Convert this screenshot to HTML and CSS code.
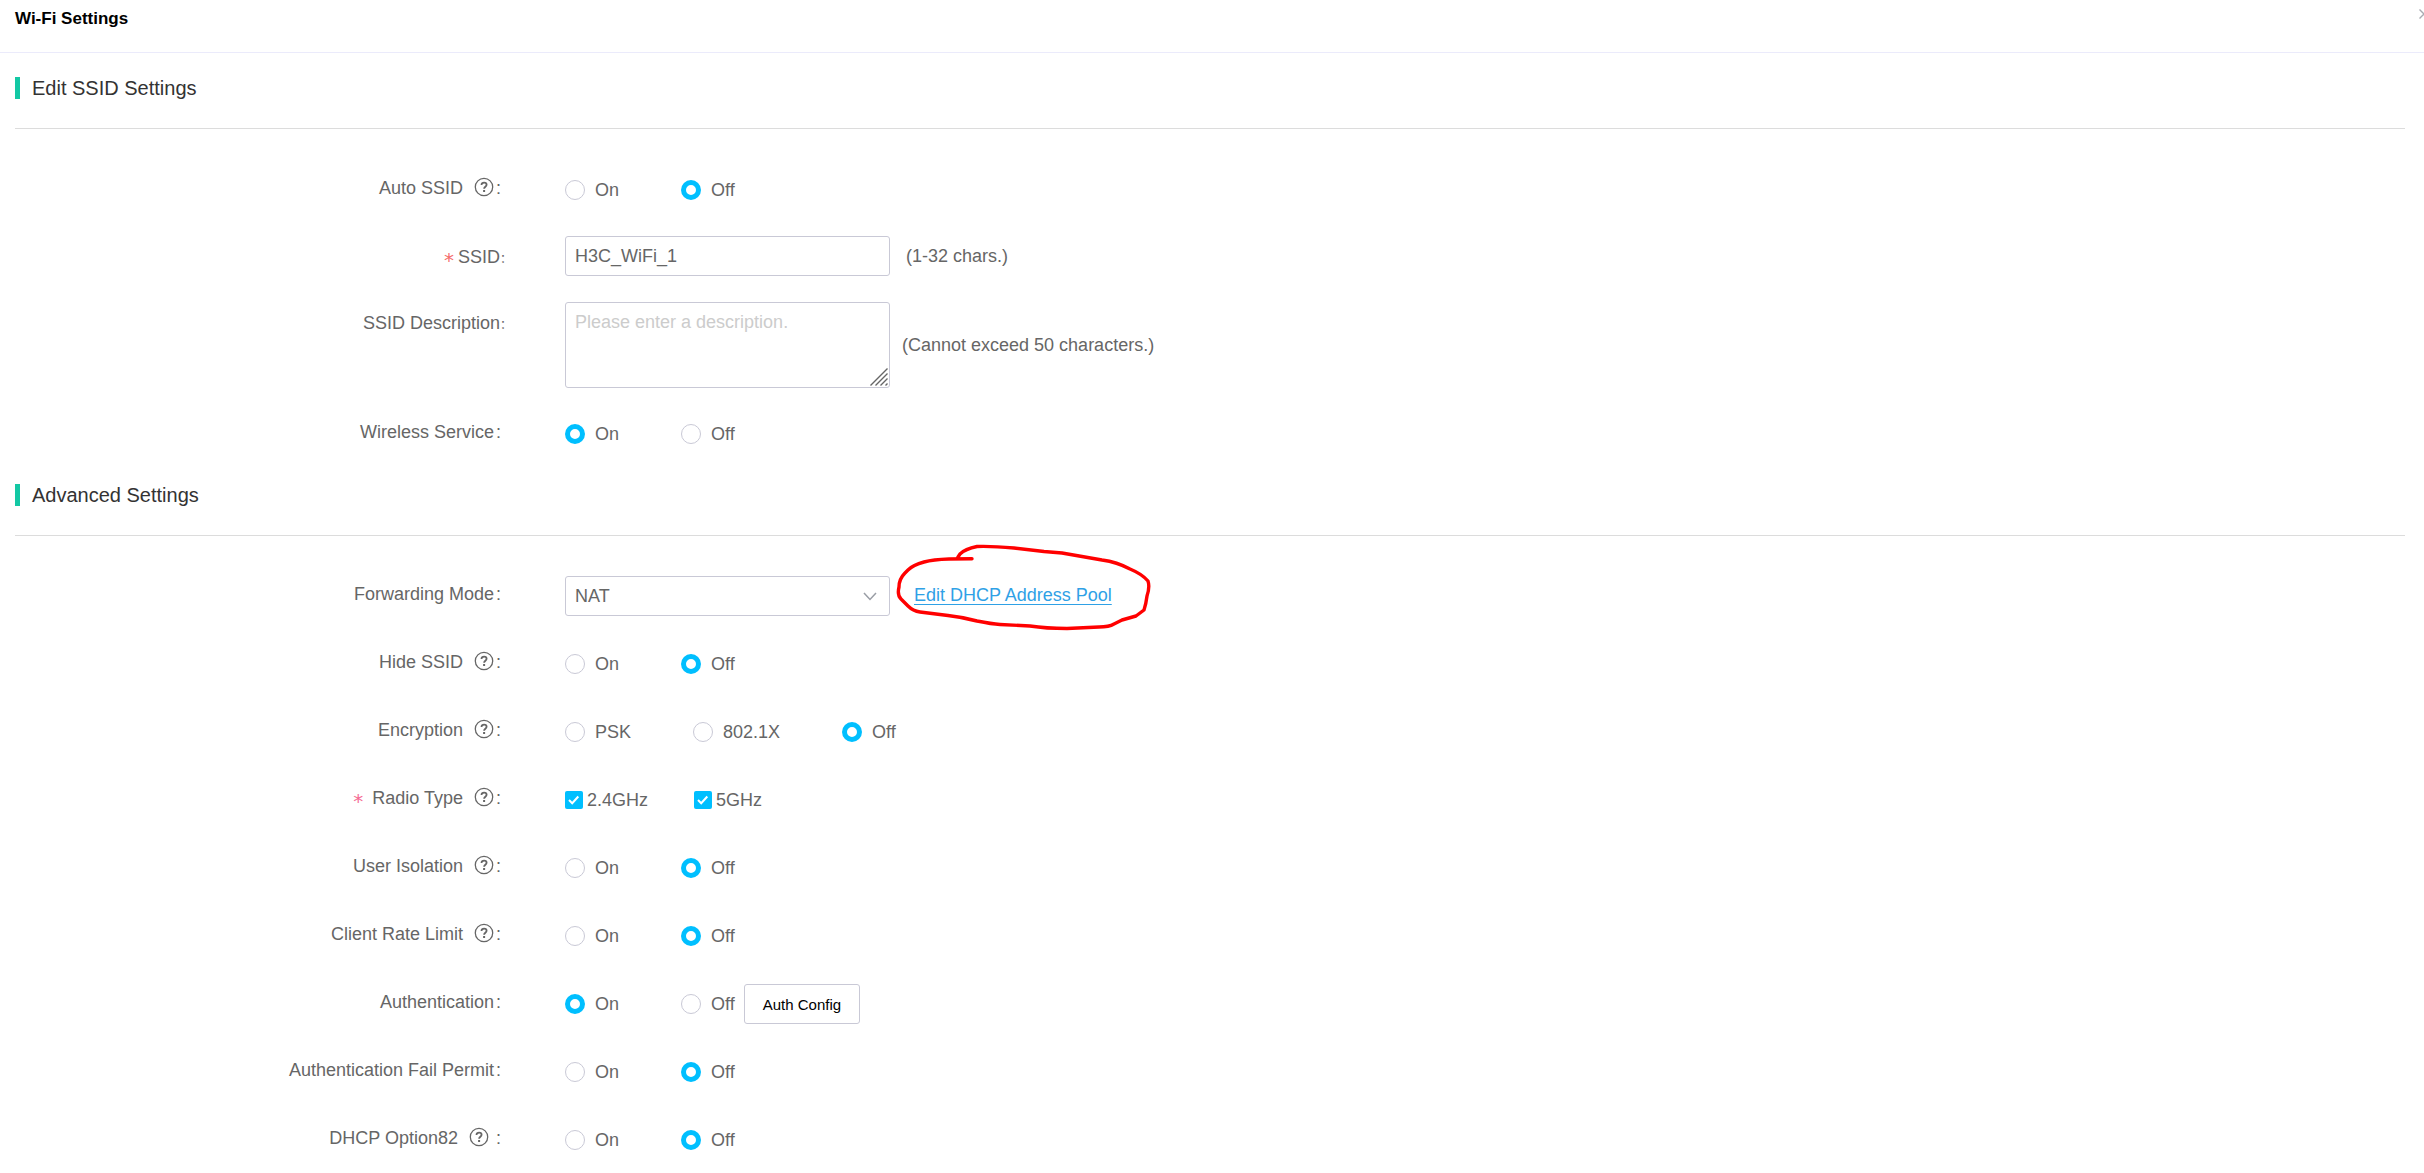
FILE: index.html
```html
<!DOCTYPE html>
<html lang="en">
<head>
    <meta charset="UTF-8">
    <meta name="viewport" content="width=device-width, initial-scale=1.0">
    <title>Wi-Fi Settings</title>
    <link rel="stylesheet" href="styles.css">
</head>
<body>
    <!-- shared icons -->
    <svg class="sprite" aria-hidden="true">
        <symbol id="icon-help" viewBox="0 0 20 20">
            <circle cx="10" cy="10" r="8.7" fill="none" stroke="currentColor" stroke-width="1.3"/>
            <path d="M7.5 8.1c0-1.6 1-2.5 2.6-2.5s2.5 .9 2.5 2.2c0 1.9-2.5 2-2.5 4" fill="none" stroke="currentColor" stroke-width="1.8"/>
            <rect x="9.1" y="13" width="2" height="2" fill="currentColor"/>
        </symbol>
    </svg>

    <header class="header">
        <h1>Wi-Fi Settings</h1>
        <button class="close-btn" type="button" aria-label="Close">
            <svg width="10" height="10" viewBox="0 0 10 10"><path d="M0.5 0.5l9 9M9.5 0.5l-9 9" stroke="#a8abb2" stroke-width="1.4"/></svg>
        </button>
    </header>

    <form class="content">
        <section>
            <h2>Edit SSID Settings</h2>
            <div class="rows">
                <div class="row">
                    <div class="label">Auto SSID<svg class="help"><use href="#icon-help"/></svg><span class="colon">:</span></div>
                    <div class="control">
                        <div class="options">
                            <label class="option"><input type="radio" name="autoSsid">On</label>
                            <label class="option"><input type="radio" name="autoSsid" checked>Off</label>
                        </div>
                    </div>
                </div>
                <div class="row">
                    <label class="label label-wide" for="ssid"><span class="required">*</span>SSID<span class="colon-wide">：</span></label>
                    <div class="control">
                        <input class="field" type="text" id="ssid" value="H3C_WiFi_1">
                        <span class="hint">(1-32 chars.)</span>
                    </div>
                </div>
                <div class="row">
                    <label class="label label-wide" for="description">SSID Description<span class="colon-wide">：</span></label>
                    <div class="control">
                        <div class="field-box">
                            <textarea class="field" id="description" placeholder="Please enter a description."></textarea>
                            <svg class="grip" width="18" height="18" viewBox="0 0 18 18"><path d="M0.5 17.5l17-17M5.5 17.5l12-12M10.5 17.5l7-7M15.5 17.5l2-2" stroke="#666" stroke-width="1.4"/></svg>
                        </div>
                        <span class="hint hint-near">(Cannot exceed 50 characters.)</span>
                    </div>
                </div>
                <div class="row">
                    <div class="label">Wireless Service<span class="colon">:</span></div>
                    <div class="control">
                        <div class="options">
                            <label class="option"><input type="radio" name="wireless" checked>On</label>
                            <label class="option"><input type="radio" name="wireless">Off</label>
                        </div>
                    </div>
                </div>
            </div>
        </section>

        <section>
            <h2>Advanced Settings</h2>
            <div class="rows rows-advanced">
                <div class="row">
                    <label class="label" for="forwarding">Forwarding Mode<span class="colon">:</span></label>
                    <div class="control">
                        <div class="field-box">
                            <select class="field" id="forwarding">
                                <option>NAT</option>
                                <option>Bridge</option>
                            </select>
                            <svg class="arrow" width="14" height="9" viewBox="0 0 14 9"><path d="M1 1l6 6.5L13 1" fill="none" stroke="#999da5" stroke-width="1.5"/></svg>
                        </div>
                        <div class="pool">
                            <a href="#">Edit DHCP Address Pool</a>
                            <svg class="marker" width="256" height="88" viewBox="0 0 256 88">
                                <path d="M76 14.7L53 15Q37 15.5 28 18Q17 21 12 26L9 29Q3 35 3 43Q1 51 5 55L12 62Q17 67 24 68L52 71.5Q66 73 81 77Q96 80 104 80.5L134 82Q150 84.5 171 84.5L203 83Q213 83 218 80L226 76L240 72L248 66Q250 60 251 52Q254 43 252 37Q246 30 234 25Q221 18 206 16L166 9L148 7.5L118 4Q96 2 81 2.5Q69 5 64 10L62 13"/>
                            </svg>
                        </div>
                    </div>
                </div>
                <div class="row">
                    <div class="label">Hide SSID<svg class="help"><use href="#icon-help"/></svg><span class="colon">:</span></div>
                    <div class="control">
                        <div class="options">
                            <label class="option"><input type="radio" name="hideSsid">On</label>
                            <label class="option"><input type="radio" name="hideSsid" checked>Off</label>
                        </div>
                    </div>
                </div>
                <div class="row">
                    <div class="label">Encryption<svg class="help"><use href="#icon-help"/></svg><span class="colon">:</span></div>
                    <div class="control">
                        <div class="options">
                            <label class="option"><input type="radio" name="encryption">PSK</label>
                            <label class="option"><input type="radio" name="encryption">802.1X</label>
                            <label class="option"><input type="radio" name="encryption" checked>Off</label>
                        </div>
                    </div>
                </div>
                <div class="row">
                    <div class="label"><span class="required required-pink">*</span>Radio Type<svg class="help"><use href="#icon-help"/></svg><span class="colon">:</span></div>
                    <div class="control">
                        <div class="options options-check">
                            <label class="check"><input type="checkbox" name="radio24" checked>2.4GHz</label>
                            <label class="check"><input type="checkbox" name="radio5" checked>5GHz</label>
                        </div>
                    </div>
                </div>
                <div class="row">
                    <div class="label">User Isolation<svg class="help"><use href="#icon-help"/></svg><span class="colon">:</span></div>
                    <div class="control">
                        <div class="options">
                            <label class="option"><input type="radio" name="isolation">On</label>
                            <label class="option"><input type="radio" name="isolation" checked>Off</label>
                        </div>
                    </div>
                </div>
                <div class="row">
                    <div class="label">Client Rate Limit<svg class="help"><use href="#icon-help"/></svg><span class="colon">:</span></div>
                    <div class="control">
                        <div class="options">
                            <label class="option"><input type="radio" name="rateLimit">On</label>
                            <label class="option"><input type="radio" name="rateLimit" checked>Off</label>
                        </div>
                    </div>
                </div>
                <div class="row">
                    <div class="label">Authentication<span class="colon">:</span></div>
                    <div class="control">
                        <div class="options">
                            <label class="option"><input type="radio" name="auth" checked>On</label>
                            <label class="option"><input type="radio" name="auth">Off</label>
                        </div>
                        <button class="auth-btn" type="button">Auth Config</button>
                    </div>
                </div>
                <div class="row">
                    <div class="label">Authentication Fail Permit<span class="colon">:</span></div>
                    <div class="control">
                        <div class="options">
                            <label class="option"><input type="radio" name="failPermit">On</label>
                            <label class="option"><input type="radio" name="failPermit" checked>Off</label>
                        </div>
                    </div>
                </div>
                <div class="row">
                    <div class="label">DHCP Option82<svg class="help"><use href="#icon-help"/></svg> <span class="colon">:</span></div>
                    <div class="control">
                        <div class="options">
                            <label class="option"><input type="radio" name="option82">On</label>
                            <label class="option"><input type="radio" name="option82" checked>Off</label>
                        </div>
                    </div>
                </div>
            </div>
        </section>
    </form>
</body>
</html>
```

FILE: styles.css
```css
* {
    box-sizing: border-box;
}
body {
    margin: 0;
    background: #fff;
    color: #666;
    font-family: "Liberation Sans", Arial, sans-serif;
    font-size: 18px;
    line-height: 24px;
    overflow-x: hidden;
}
.sprite {
    display: none;
}
.header {
    display: flex;
    justify-content: space-between;
    align-items: flex-start;
    height: 53px;
    padding: 7px 0 0 15px;
    border-bottom: 1px solid #ebebfb;
}
.header h1 {
    margin: 0;
    font-size: 17px;
    line-height: 24px;
    color: #000;
}
.close-btn {
    display: flex;
    margin: 2px -5px 0 0;
    padding: 0;
    border: none;
    background: none;
    cursor: pointer;
}
.content {
    padding: 24px 19px 0 15px;
}
h2 {
    position: relative;
    margin: 0;
    padding: 0 0 29px 17px;
    border-bottom: 1px solid #dcdcdc;
    font-size: 20px;
    font-weight: normal;
    line-height: 22px;
    color: #333;
}
h2::before {
    content: "";
    position: absolute;
    left: 0;
    top: 0;
    width: 5px;
    height: 22px;
    background: #13c8a4;
}
.rows {
    display: flex;
    flex-direction: column;
    gap: 26px;
    padding: 41px 0 30px;
}
.rows-advanced {
    gap: 28px;
    padding: 40px 0 0;
}
.row {
    display: grid;
    grid-template-columns: 550px 1fr;
}
.label {
    height: 36px;
    padding-right: 64px;
    line-height: 36px;
    text-align: right;
}
.label-wide {
    height: 40px;
    padding-right: 53px;
    line-height: 42px;
}
.colon {
    margin-left: 2px;
}
.colon-wide {
    font-family: "Noto Sans CJK SC", sans-serif;
    font-size: 12px;
    line-height: 1;
}
.required {
    margin-right: 4px;
    color: #f56c6c;
    font-family: "DejaVu Sans", sans-serif;
    font-size: 20px;
    line-height: 1;
    vertical-align: -4px;
}
.required-pink {
    margin-right: 9px;
    color: #f56c94;
}
.help {
    width: 20px;
    height: 20px;
    margin-left: 11px;
    vertical-align: -3px;
}
.control {
    display: flex;
    align-items: center;
    min-height: 40px;
}
.options {
    display: flex;
    gap: 62px;
}
.options-check {
    gap: 46px;
}
.option,
.check {
    display: flex;
    align-items: center;
    gap: 10px;
    cursor: pointer;
}
.check {
    gap: 4px;
}
input[type="radio"] {
    appearance: none;
    width: 20px;
    height: 20px;
    margin: 0;
    border: 1px solid #c9c9d6;
    border-radius: 50%;
    background: #fff;
}
input[type="radio"]:checked {
    border: 5px solid #00bfff;
}
input[type="checkbox"] {
    appearance: none;
    width: 18px;
    height: 18px;
    margin: 0;
    border-radius: 2px;
    border: 1px solid #c9c9d6;
}
input[type="checkbox"]:checked {
    border: none;
    background: #00bfff url("data:image/svg+xml,%3Csvg xmlns='http://www.w3.org/2000/svg' viewBox='0 0 18 18'%3E%3Cpath d='M4 9l3.2 3.2L13.3 5.5' fill='none' stroke='white' stroke-width='2'/%3E%3C/svg%3E");
}
.field {
    display: block;
    width: 325px;
    height: 40px;
    padding: 0 9px;
    border: 1px solid #c9c9d6;
    border-radius: 3px;
    background: #fff;
    color: #666;
    font: inherit;
    appearance: none;
}
textarea.field {
    height: 86px;
    padding: 7px 9px;
    resize: none;
}
.field::placeholder {
    color: #ccc;
}
.field-box {
    position: relative;
}
.grip {
    position: absolute;
    right: 2px;
    bottom: 2px;
}
.arrow {
    position: absolute;
    right: 13px;
    top: 16px;
    pointer-events: none;
}
.hint {
    margin-left: 16px;
}
.hint-near {
    margin-left: 12px;
}
.pool {
    position: relative;
    margin-left: 24px;
    padding-bottom: 2px;
}
.pool a {
    color: #2fa1e6;
    text-underline-offset: 3px;
    text-decoration-thickness: 1px;
}
/* hand-drawn circle round the link */
.marker {
    position: absolute;
    left: -18px;
    top: -39px;
    pointer-events: none;
}
.marker path {
    fill: none;
    stroke: #f00;
    stroke-width: 3.4;
    stroke-linecap: round;
    stroke-linejoin: round;
}
.auth-btn {
    height: 40px;
    margin-left: 9px;
    padding: 0 18px;
    border: 1px solid #c9c9d6;
    border-radius: 3px;
    background: #fff;
    color: #000;
    font-family: inherit;
    font-size: 15px;
    cursor: pointer;
}
```
